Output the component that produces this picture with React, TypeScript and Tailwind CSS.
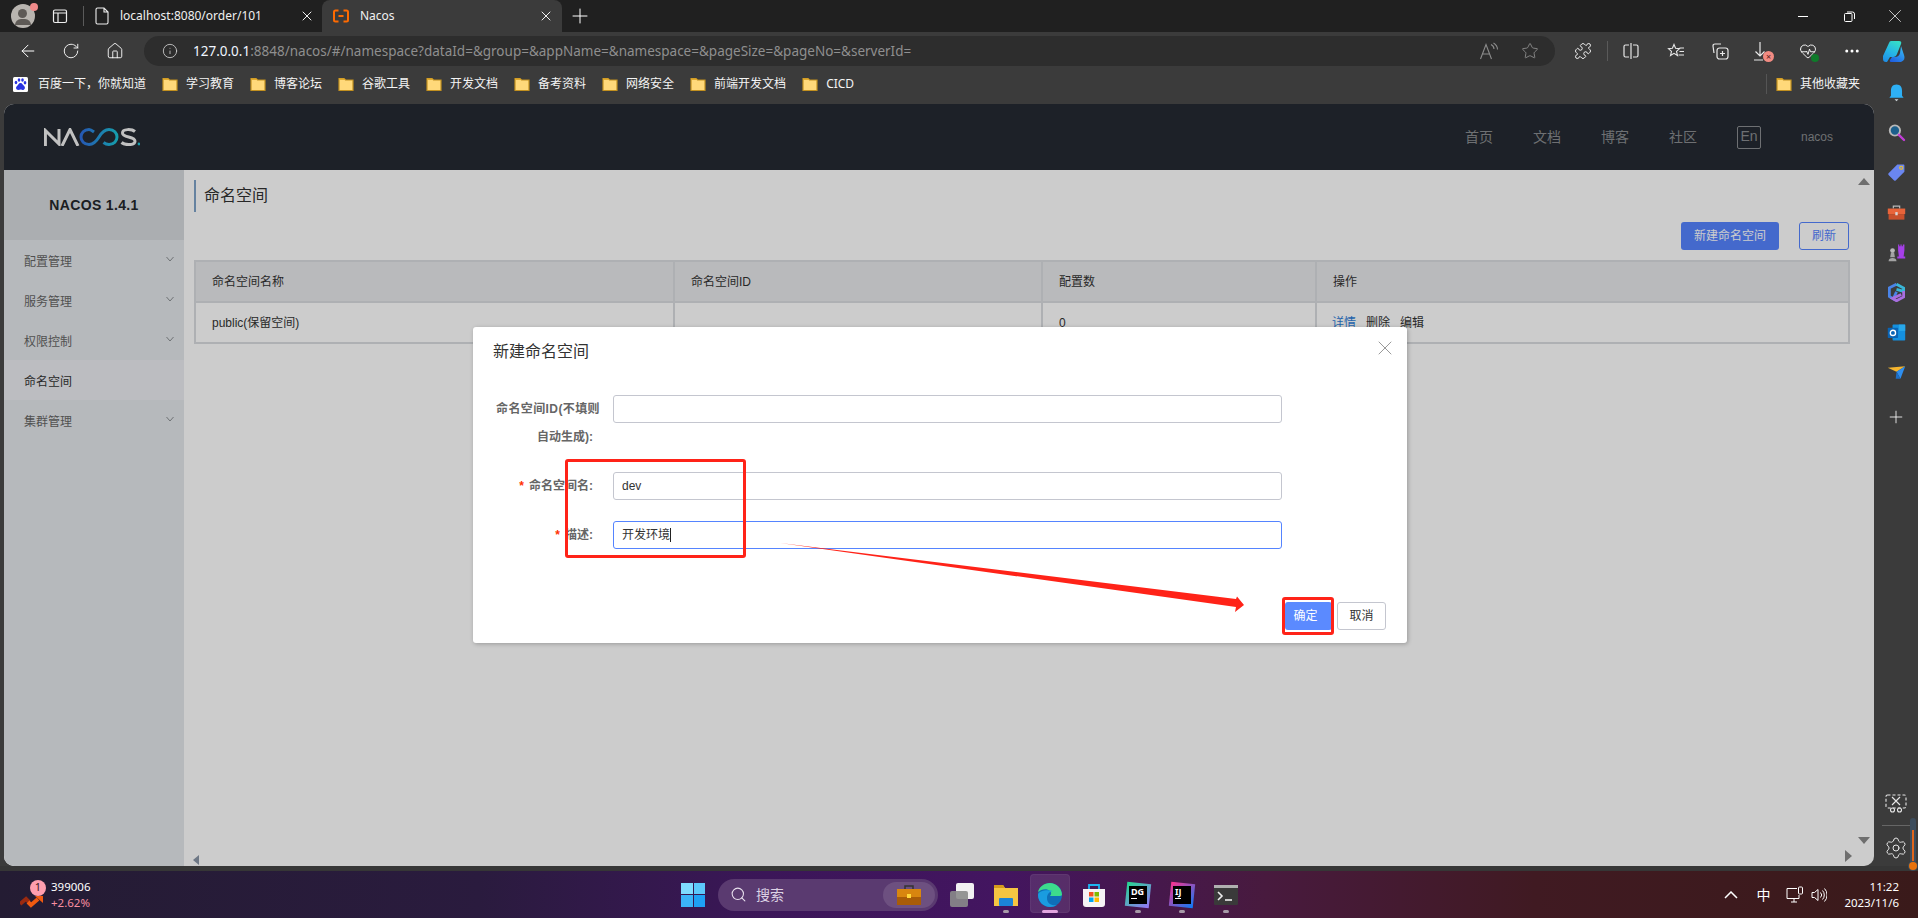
import React from "react";
import {
  ArrowLeft,
  Ellipsis,
  HeartPulse,
  House,
  Info,
  Plus,
  Puzzle,
  RotateCw,
  Search,
  Settings,
  Star,
  X,
} from "lucide-react";

const Folder = () => (
  <svg width="16" height="16" viewBox="0 0 16 16" className="shrink-0">
    <path d="M1 2.5h5l1.5 1.5H15v10.5H1z" fill="#ffd97a" stroke="#c2901f" strokeWidth="1.2" />
    <path d="M1 2.5h5l1.5 1.5H1z" fill="#e0a92e" />
  </svg>
);

const bookmarks = ["学习教育", "博客论坛", "谷歌工具", "开发文档", "备考资料", "网络安全", "前端开发文档", "CICD"];

const BaiduIcon = () => (
  <svg width="15" height="15" viewBox="0 0 15 15" className="shrink-0">
    <rect width="15" height="15" rx="1.5" fill="#fff" />
    <g fill="#2932e1">
      <ellipse cx="3" cy="5.5" rx="1.3" ry="1.7" />
      <ellipse cx="6" cy="3" rx="1.3" ry="1.7" />
      <ellipse cx="9.5" cy="3" rx="1.3" ry="1.7" />
      <ellipse cx="12" cy="5.8" rx="1.3" ry="1.7" />
      <path d="M7.5 6c2 0 2.2 2 3.6 3 1.5 1.2.9 4-1.5 4-1 0-1.3-.4-2.1-.4s-1.300.4-2.200.4c-2.400 0-2.900-2.900-1.200-4C5.300 8 5.500 6 7.500 6z" />
    </g>
  </svg>
);

const NacosTabIcon = () => (
  <svg width="16" height="14" viewBox="0 0 16 14" fill="none" stroke="#ff6a00" strokeWidth="2">
    <path d="M5.500 1.500H2.500Q1 1.500 1 3v8q0 1.500 1.500 1.500h3M10.500 1.500h3Q15 1.500 15 3v8q0 1.500-1.500 1.500h-3M5.500 7h5" />
  </svg>
);

const ReadAloud = () => (
  <svg width="20" height="18" viewBox="0 0 20 18" fill="none" stroke="#8c8c8c" strokeWidth="1.100">
    <path d="M1.500 17 7 2.500 12.500 17M3.300 12h7.400M12 2.500c2 1 3 2.500 3 4.500M14.500 1c2.500 1.500 4 3.500 4 6.500" />
  </svg>
);

const SplitIcon = () => (
  <svg width="16" height="18" viewBox="0 0 16 18" fill="none" stroke="#e8e8e8" strokeWidth="1.200">
    <path d="M6 3H2.500Q1 3 1 4.500v9Q1 15 2.500 15H6M10 3h3.500Q15 3 15 4.500v9q0 1.500-1.500 1.500H10M8 1v16" />
  </svg>
);

const FavIcon = () => (
  <svg width="18" height="18" viewBox="0 0 18 18" fill="none" stroke="#e8e8e8" strokeWidth="1.100">
    <path d="M7 2.500l1.600 3.800 3.900.4-3 2.700 1 4.100L7 11.300 3.500 13.500l1-4.100-3-2.700 3.900-.4zM12.500 6H17M12.500 9.500H17M11.500 13H17" />
  </svg>
);

const CollectionsIcon = () => (
  <svg width="18" height="18" viewBox="0 0 18 18" fill="none" stroke="#e8e8e8" strokeWidth="1.200">
    <path d="M10 2H4Q2 2 2 4l1 7" />
    <rect x="6" y="6" width="11" height="11" rx="2.500" />
    <path d="M11.500 9v5M9 11.500h5" />
  </svg>
);

const DownloadIcon = () => (
  <div className="relative h-[20px] w-[18px]">
    <svg width="18" height="20" viewBox="0 0 18 20" fill="none" stroke="#e8e8e8" strokeWidth="1.200">
      <path d="M6 1v14M1.500 10.500 6 15l4.500-4.500M0 19h9" />
    </svg>
    <span className="absolute bottom-[-1px] right-[-2px] flex h-[11px] w-[11px] items-center justify-center rounded-full bg-[#f28b82] text-[9px] leading-none text-[#5a2020]">×</span>
  </div>
);

const CopilotIcon = () => (
  <svg width="24" height="23" viewBox="0 0 24 23">
    <defs>
      <linearGradient id="cpA" x1="0.7" y1="0" x2="0.2" y2="1">
        <stop offset="0" stopColor="#35dcc8" />
        <stop offset="0.55" stopColor="#25b4e8" />
        <stop offset="1" stopColor="#1f8fe6" />
      </linearGradient>
      <linearGradient id="cpB" x1="0.8" y1="0" x2="0.2" y2="1">
        <stop offset="0" stopColor="#38c0f5" />
        <stop offset="1" stopColor="#1f5fe0" />
      </linearGradient>
    </defs>
    <path d="M19 6l3 9q2 5-3 7H10q-3 0-2-2l2-3h3q4 0 5-4z" fill="url(#cpB)" />
    <path d="M9 1h8q3 0 2 3L15 14q-1 3-4 3H8l-3 5H4q-3 0-3-3V16L7 3q.6-2 2-2z" fill="url(#cpA)" />
  </svg>
);

const RailBell = () => (
  <svg width="19" height="19" viewBox="0 0 24 24">
    <path d="M12 2c5 0 7 3.500 7 8v6l2 2.500H3L5 16v-6c0-4.500 2-8 7-8z" fill="#2eb0f5" />
    <path d="M9.500 20.500h5L12 23z" fill="#cfd6da" />
  </svg>
);

const RailSearch = () => (
  <svg width="19" height="19" viewBox="0 0 24 24" fill="none">
    <circle cx="10" cy="9.500" r="6.500" fill="#1c5f8c" stroke="#b8b8b8" strokeWidth="2.400" />
    <path d="M15 15l6.500 6.500" stroke="#c23ed8" strokeWidth="3" strokeLinecap="round" />
  </svg>
);

const RailTag = () => (
  <svg width="19" height="19" viewBox="0 0 24 24">
    <path d="M13 2h8q1 0 1 1v8L11 22q-1 1-2 0L2 15q-1-1 0-2z" fill="#6a86f0" />
    <circle cx="18" cy="6" r="2" fill="none" stroke="#f5c518" strokeWidth="1.300" />
  </svg>
);

const RailToolbox = () => (
  <svg width="19" height="19" viewBox="0 0 24 24">
    <path d="M8 7V4h8v3" fill="none" stroke="#b8b8b8" strokeWidth="1.500" />
    <rect x="1" y="7" width="22" height="7" fill="#e8643a" />
    <rect x="2" y="14" width="20" height="7" fill="#c9502c" />
    <rect x="10.500" y="11.500" width="3" height="4" fill="#d8d8d8" />
  </svg>
);

const RailChess = () => (
  <svg width="19" height="19" viewBox="0 0 24 24">
    <path d="M14 2h1.500v2H17V2h1.500v2H20V2h2v7l-1 8h2v2.500H13V17h2l-1-8z" fill="#a53fe8" />
    <circle cx="7" cy="9.500" r="3" fill="#b8b8b8" />
    <path d="M5 12h4l1 6H4zM2 23c0-3 2-4 5-4s5 1 5 4z" fill="#a3a3a3" />
  </svg>
);

const RailM365 = () => (
  <svg width="19" height="19" viewBox="0 0 24 24" fill="none">
    <path d="M12 1.500 3 6v11l5 3 4-9" stroke="#4a84e8" strokeWidth="3.500" />
    <path d="M12 1.500l9 5v4l-9-2.500" stroke="#39b6d8" strokeWidth="3.500" />
    <path d="M21 10v7.500l-9 5-5-3 11-5" stroke="#a86ee0" strokeWidth="3.500" />
  </svg>
);

const RailOutlook = () => (
  <svg width="19" height="19" viewBox="0 0 24 24">
    <rect x="7" y="2" width="16" height="20" rx="1" fill="#1490df" />
    <rect x="15" y="2" width="8" height="8" fill="#28a8ea" />
    <rect x="1" y="6" width="13" height="13" rx="1" fill="#0a64b4" />
    <circle cx="7.500" cy="12.500" r="3.300" fill="none" stroke="#fff" strokeWidth="1.700" />
  </svg>
);

const RailSend = () => (
  <svg width="19" height="19" viewBox="0 0 24 24">
    <path d="M1 6l22-2-11 7z" fill="#f5b52e" />
    <path d="M23 4l-6 16-5-9z" fill="#2e8ff0" />
    <path d="M12 11l-1 9 6 0z" fill="#1c6fc8" />
  </svg>
);

const railIcons = [RailBell, RailSearch, RailTag, RailToolbox, RailChess, RailM365, RailOutlook, RailSend];

const NacosLogo = () => (
  <svg width="96" height="18" viewBox="0 0 96 18" fill="none" strokeWidth="3">
    <defs>
      <linearGradient id="logoLoop" x1="0" y1="0" x2="1" y2="0">
        <stop offset="0" stopColor="#2f6fe0" />
        <stop offset="1" stopColor="#1cc4d8" />
      </linearGradient>
    </defs>
    <path d="M1.400 18V2.500L15 16V1" stroke="#f2f2f2" />
    <path d="M18 18 26 1.500 34 18" stroke="#f2f2f2" />
    <path
      d="M50 4C48 2.500 46.500 1.500 45 1.500 40 1.500 37 5 37 9s3 7.500 8 7.500c4 0 7-2.500 10-7.500 3-5 6-7.500 10-7.500 5 0 8 3.500 8 7.500s-3 7.500-8 7.500c-2 0-4-.800-5.500-2"
      stroke="url(#logoLoop)"
    />
    <path d="M91 3.500C88 1 78.500.5 78.500 5c0 5 12.500 3 12.500 8.200 0 4.300-10 4.300-13.500 1.300" stroke="#f2f2f2" />
    <circle cx="95" cy="16" r="1.400" fill="#1cc4d8" />
  </svg>
);

const Triangle = ({ className }: { className: string }) => <div className={`absolute h-0 w-0 ${className}`} />;

const menu = [
  { name: "配置管理", arrow: true },
  { name: "服务管理", arrow: true },
  { name: "权限控制", arrow: true },
  { name: "命名空间", arrow: false, active: true },
  { name: "集群管理", arrow: true },
];

const Chevron = () => (
  <svg width="8" height="6" viewBox="0 0 8 6" fill="none" stroke="#8b8f93" strokeWidth="1">
    <path d="M.5 1 4 5l3.500-4" />
  </svg>
);

const Sidebar = () => (
  <div className="flex w-[180px] shrink-0 flex-col bg-[#e4e8eb]">
    <div className="flex h-[70px] items-center justify-center bg-[#d6dade] text-[14px] font-bold tracking-[0.35px] text-[#23262a]">NACOS 1.4.1</div>
    {menu.map((item) => (
      <div
        key={item.name}
        className={`flex h-10 items-center justify-between pl-5 pr-[10px] pt-1 text-[12px] ${item.active ? "bg-[#ebedf2] text-[#333]" : "text-[#666]"}`}
      >
        <span>{item.name}</span>
        {item.arrow && <span className="mb-[6px]"><Chevron /></span>}
      </div>
    ))}
  </div>
);

const NamespaceTable = () => (
  <table className="w-[1654px] table-fixed border-collapse text-[12px] text-[#333]">
    <colgroup>
      <col className="w-[479px]" />
      <col className="w-[368px]" />
      <col className="w-[274px]" />
      <col className="w-[533px]" />
    </colgroup>
    <thead>
      <tr className="h-[41px] bg-[#e8e9eb]">
        {["命名空间名称", "命名空间ID", "配置数", "操作"].map((h) => (
          <th key={h} className="border-2 border-[#dadce0] px-4 text-left font-normal">{h}</th>
        ))}
      </tr>
    </thead>
    <tbody>
      <tr className="h-[41px]">
        <td className="border-2 border-[#dadce0] px-4">public(保留空间)</td>
        <td className="border-2 border-[#dadce0] px-4"></td>
        <td className="border-2 border-[#dadce0] px-4">0</td>
        <td className="border-2 border-[#dadce0] pl-[15px] pr-4">
          <span className="text-[#2d7cd6]">详情</span>
          <span className="ml-[10px]">删除</span>
          <span className="ml-[10px]">编辑</span>
        </td>
      </tr>
    </tbody>
  </table>
);

const Field = ({ label, required, value, focused, caret }: { label: string; required?: boolean; value?: string; focused?: boolean; caret?: boolean }) => (
  <div className="mb-[21px] flex">
    <div className="flex h-7 w-[140px] items-center justify-end pr-5 text-[12px] font-bold text-[#666]">
      {required && <span className="mr-[5px] text-[#ff3000]">*</span>}
      {label}
    </div>
    <div className={`flex h-7 w-[669px] items-center rounded-[3px] border px-2 text-[12px] text-[#333] ${focused ? "border-[#5584ff]" : "border-[#c4c6cf]"}`}>
      {value}
      {caret && <span className="h-[14px] w-px bg-[#222]" />}
    </div>
  </div>
);

const Dialog = () => (
  <div className="absolute left-[469px] top-[223px] z-20 flex h-[316px] w-[934px] flex-col rounded-[3px] bg-white shadow-[1px_1px_4px_rgba(0,0,0,0.25)]">
    <div className="h-[68px] pl-5 pt-[13px] text-[16px] leading-6 text-[#333]">新建命名空间</div>
    <X className="absolute left-[900px] top-[9px] h-6 w-6 text-[#999]" strokeWidth={1} />
    <div className="flex flex-col">
      <div className="mb-[21px] flex h-[56px]">
        <div className="w-[140px] pr-5 text-right text-[12px] font-bold leading-7 text-[#666]">
          <div className="mr-[-7px] tracking-[0.4px]">命名空间ID(不填则</div>
          <div>自动生成):</div>
        </div>
        <div className="h-7 w-[669px] rounded-[3px] border border-[#c4c6cf]" />
      </div>
      <Field label="命名空间名:" required value="dev" />
      <Field label="描述:" required value="开发环境" focused caret />
    </div>
    <div className="mr-[21px] mt-auto mb-[13px] flex justify-end gap-[5px] text-[12px]">
      <div className="flex h-7 w-[47px] items-center justify-center rounded-[3px] bg-[#5b8aff] pr-[6px] text-white">确定</div>
      <div className="flex h-7 w-[49px] items-center justify-center rounded-[3px] border border-[#c4c6cf] text-[#333]">取消</div>
    </div>

    {/* 标注 */}
    <div className="absolute left-[92px] top-[132px] h-[99px] w-[181px] rounded-[3px] border-[3px] border-[#ff2318]" />
    <div className="absolute left-[809px] top-[270px] h-[38px] w-[52px] rounded-[3px] border-[3px] border-[#ff2318]" />
    <svg className="absolute left-0 top-0" width="934" height="316" viewBox="0 0 934 316">
      <path d="M307 216 763 272 764 269.500 771 278 762 285 763 280z" fill="#ff2318" />
    </svg>
  </div>
);

const TaskDot = ({ active }: { active?: boolean }) => (
  <span className={`absolute bottom-[5px] h-[3px] rounded-full ${active ? "w-4 bg-[#e3a5e0]" : "w-[6px] bg-[#a79aa8]"}`} />
);

const StartIcon = () => (
  <div className="grid h-6 w-6 shrink-0 grid-cols-2 gap-[1px]">
    <span className="bg-[#7fdcff]" />
    <span className="bg-[#5cc8fb]" />
    <span className="bg-[#3bb4f8]" />
    <span className="bg-[#1ea0f5]" />
  </div>
);

const ToolboxIcon = () => (
  <svg width="26" height="24" viewBox="0 0 26 24">
    <path d="M9 6V3h8v3" fill="none" stroke="#333" strokeWidth="1.500" />
    <rect x="1" y="6" width="24" height="8" fill="#d8860f" />
    <rect x="1" y="14" width="24" height="8" fill="#a85c08" />
    <rect x="11" y="11" width="4" height="4" fill="#ffd83a" />
  </svg>
);

const WidgetsIcon = () => (
  <div className="relative h-6 w-6">
    <span className="absolute right-0 top-0 h-4 w-[18px] rounded-[2px] bg-[#f2f0f2]" />
    <span className="absolute bottom-0 left-0 h-4 w-[18px] rounded-[2px] bg-[#8b8b8b]/90" />
  </div>
);

const FolderTask = () => (
  <svg width="24" height="24" viewBox="0 0 24 24">
    <path d="M0 2h9l2 3h13v18H0z" fill="#f5c542" />
    <path d="M0 2h9l2 3H0z" fill="#d59a1c" />
    <rect x="5" y="15" width="14" height="8" rx="1" fill="#1b84d8" />
  </svg>
);

const EdgeIcon = () => (
  <svg width="24" height="24" viewBox="0 0 24 24">
    <circle cx="12" cy="12" r="12" fill="#0f6fb8" />
    <path d="M24 12C24 5 18 0 12 0 6 0 1 4 0 9c3-3 9-4 12-1 2 2 1 4 0 5h6c3 0 6 0 6-1z" fill="#3ddb8c" />
    <path d="M0 12c0 7 6 12 12 12 3 0 5-1 7-2-5 1-10-1-10-7 0-4 3-7 6-7-6-2-15 0-15 4z" fill="#1a9ce0" />
  </svg>
);

const StoreIcon = () => (
  <svg width="24" height="24" viewBox="0 0 24 24">
    <path d="M7 6V2h10v4" fill="none" stroke="#1eb4f0" strokeWidth="1.800" />
    <path d="M1 6h22v15q0 3-3 3H4q-3 0-3-3z" fill="#f5f2f5" />
    <rect x="7" y="9" width="4.500" height="4.500" fill="#f25022" />
    <rect x="12.500" y="9" width="4.500" height="4.500" fill="#7fba00" />
    <rect x="7" y="14.500" width="4.500" height="4.500" fill="#00a4ef" />
    <rect x="12.500" y="14.500" width="4.500" height="4.500" fill="#ffb900" />
  </svg>
);

const JetBrainsIcon = ({ label, a, b }: { label: string; a: string; b: string }) => (
  <div className="relative flex h-6 w-6 items-start justify-center">
    <span className="absolute left-0 top-0 h-6 w-6 rotate-6" style={{ background: `linear-gradient(135deg, ${a}, ${b})` }} />
    <span className="absolute left-[3px] top-[3px] flex h-[18px] w-[18px] flex-col bg-black px-[2px] text-[9px] font-bold leading-[11px] text-white">
      {label}
      <span className="mt-[1px] h-[1.500px] w-[6px] bg-white" />
    </span>
  </div>
);

const TerminalIcon = () => (
  <svg width="24" height="24" viewBox="0 0 24 24">
    <rect x="0" y="2" width="24" height="20" rx="1" fill="#3a3a3a" />
    <rect x="0" y="2" width="24" height="3" fill="#b0b0b0" />
    <path d="M4 9l4 4-4 4" fill="none" stroke="#eee" strokeWidth="1.600" />
    <path d="M11 17h7" stroke="#eee" strokeWidth="1.600" />
  </svg>
);

const taskIcons: { el: React.ReactNode; dot?: boolean; active?: boolean }[] = [
  { el: <WidgetsIcon /> },
  { el: <FolderTask />, dot: true },
  { el: <EdgeIcon />, dot: true, active: true },
  { el: <StoreIcon /> },
  { el: <JetBrainsIcon label="DG" a="#22d88f" b="#9775f8" />, dot: true },
  { el: <JetBrainsIcon label="IJ" a="#ff318c" b="#087cfa" />, dot: true },
  { el: <TerminalIcon />, dot: true },
];

const Taskbar = () => (
  <div className="flex h-[47px] shrink-0 items-center bg-[linear-gradient(90deg,#241c33_0%,#2a1b3e_25%,#3b1658_40%,#431560_52%,#481a3e_66%,#401a22_80%,#3a1a1a_100%)] text-white">
    <div className="flex w-[681px] shrink-0 items-center pl-5">
      <div className="relative h-6 w-6">
        <svg width="24" height="24" viewBox="0 0 24 24" className="mt-[4px]">
          <path d="M0 17l6-5 3 3" fill="none" stroke="#9a2a10" strokeWidth="4" />
          <path d="M8 15l3 3 7-6" fill="none" stroke="#f05a10" strokeWidth="4" />
          <path d="M15 9h8v7z" fill="#f05a10" />
        </svg>
        <span className="absolute left-[10px] top-[-3px] flex h-4 w-4 items-center justify-center rounded-full bg-[#ff9eae] text-[11px] text-[#3a1a22]">1</span>
      </div>
      <div className="ml-[7px] flex flex-col text-[11.500px] leading-4">
        <span>399006</span>
        <span className="text-[#f98ea0]">+2.62%</span>
      </div>
    </div>
    <StartIcon />
    <div className="ml-[13px] flex h-8 w-[220px] shrink-0 items-center rounded-full bg-[#5a3a70] pl-[12px]">
      <Search className="h-[17px] w-[17px] text-[#e8e0ee]" strokeWidth={1.500} />
      <span className="ml-[9px] text-[14px] text-[#dcd2e4]">搜索</span>
      <div className="ml-auto mr-[3px] flex h-[26px] w-[52px] items-center justify-center rounded-full bg-[#6d5080]">
        <ToolboxIcon />
      </div>
    </div>
    <div className="ml-[2px] flex">
      {taskIcons.map((t, i) => (
        <div key={i} className="relative flex h-[47px] w-11 items-center justify-center">
          {t.active && <span className="absolute left-[2px] top-[3px] h-[39px] w-10 rounded-[4px] border border-white/5 bg-white/10" />}
          <span className="relative">{t.el}</span>
          {t.dot && <TaskDot active={t.active} />}
        </div>
      ))}
    </div>
    <div className="ml-auto flex items-center">
      <svg width="14" height="8" viewBox="0 0 14 8" fill="none" stroke="#fff" strokeWidth="1.500">
        <path d="M1 7l6-6 6 6" />
      </svg>
      <span className="ml-[18px] text-[14px]">中</span>
      <svg className="ml-[16px]" width="18" height="18" viewBox="0 0 18 18" fill="none" stroke="#fff" strokeWidth="1">
        <path d="M11 2.500H1v10h12V9M5 16h6M8 12.500V16" />
        <rect x="12.500" y="1" width="4" height="7" rx="1" />
      </svg>
      <svg className="ml-[7px]" width="16" height="16" viewBox="0 0 16 16" fill="none" stroke="#fff" strokeWidth="1">
        <path d="M1 5.500h2.500L7 2.500v11l-3.500-3H1zM9.500 5.500a3.500 3.500 0 0 1 0 5M11.500 3.500a6.500 6.500 0 0 1 0 9M13.500 1.500a9.500 9.500 0 0 1 0 13" />
      </svg>
      <div className="ml-[17px] mr-[19px] flex flex-col items-end text-[11.500px] leading-4">
        <span>11:22</span>
        <span>2023/11/6</span>
      </div>
    </div>
  </div>
);

export default function App() {
  return (
    <div className="relative flex h-[918px] w-[1918px] flex-col overflow-hidden bg-[#3b3b3b] font-['Noto_Sans','Noto_Sans_CJK_SC',sans-serif] text-white">
      {/* 标签栏 */}
      <div className="flex h-8 shrink-0 items-center bg-[#202020] text-[12px]">
        <div className="relative ml-[11px] h-6 w-6 rounded-full bg-[#b9b5b0]">
          <span className="absolute left-[7px] top-[5px] h-[9px] w-[9px] rounded-full bg-[#5e5a56]" />
          <span className="absolute bottom-[3px] left-[4px] h-[6px] w-4 rounded-t-full bg-[#5e5a56]" />
          <span className="absolute right-[-3px] top-[-1px] h-2 w-2 rounded-full bg-[#f08a8a]" />
        </div>
        <svg className="ml-[17px]" width="16" height="16" viewBox="0 0 16 16" fill="none" stroke="#eee" strokeWidth="1.200">
          <rect x="1.500" y="2" width="13" height="12.500" rx="1.500" />
          <path d="M1.500 5h13M6 5v9.500" />
        </svg>
        <span className="ml-[15px] h-5 w-px bg-[#5a5a5a]" />
        <div className="flex h-8 w-[238px] items-center pl-[11px]">
          <svg width="14" height="18" viewBox="0 0 14 18" fill="none" stroke="#eee" strokeWidth="1.100">
            <path d="M1 2.500Q1 1 2.500 1H9l4 4v10.500q0 1.500-1.500 1.500h-9Q1 17 1 15.500zM9 1v4h4" />
          </svg>
          <span className="ml-[11px] text-[#f0f0f0]">localhost:8080/order/101</span>
          <X className="ml-auto mr-[7px] h-4 w-4" strokeWidth={1.400} />
        </div>
        <div className="flex h-8 w-[240px] items-center rounded-t-lg bg-[#3b3b3b] pl-[11px]">
          <NacosTabIcon />
          <span className="ml-[11px] text-[#f0f0f0]">Nacos</span>
          <X className="ml-auto mr-[8px] h-4 w-4" strokeWidth={1.400} />
        </div>
        <Plus className="ml-[6px] h-6 w-6" strokeWidth={1} />
        <div className="ml-auto flex">
          <div className="flex h-8 w-[46px] items-center justify-center"><span className="h-px w-[10px] bg-white" /></div>
          <div className="flex h-8 w-[46px] items-center justify-center">
            <svg width="11" height="11" viewBox="0 0 11 11" fill="none" stroke="#fff" strokeWidth="1">
              <rect x=".5" y="2.500" width="7.500" height="8" rx="1" />
              <path d="M3 1h5.500q2 0 2 2v5" />
            </svg>
          </div>
          <div className="flex h-8 w-[46px] items-center justify-center"><X className="h-[22px] w-[22px]" strokeWidth={0.800} /></div>
        </div>
      </div>

      {/* 地址栏 */}
      <div className="flex h-[34px] shrink-0 items-center pt-1">
        <ArrowLeft className="ml-[18px] h-5 w-5" strokeWidth={1.200} />
        <RotateCw className="ml-[24px] h-[18px] w-[18px]" strokeWidth={1.200} />
        <House className="ml-[26px] h-[18px] w-[18px]" strokeWidth={1.200} />
        <div className="ml-[20px] flex h-[30px] w-[1411px] shrink-0 items-center rounded-full bg-[#2d2d2d]">
          <Info className="ml-[18px] h-4 w-4 text-[#d8d8d8]" strokeWidth={1.200} />
          <span className="ml-[15px] text-[13.500px] text-[#8f8f8f]">
            <span className="text-[#f0f6ff]">127.0.0.1</span>:8848/nacos/#/namespace?dataId=&amp;group=&amp;appName=&amp;namespace=&amp;pageSize=&amp;pageNo=&amp;serverId=
          </span>
          <span className="ml-auto"><ReadAloud /></span>
          <Star className="ml-[22px] mr-[16px] h-[18px] w-[18px] text-[#8c8c8c]" strokeWidth={1.200} />
        </div>
        <Puzzle className="ml-[19px] h-[18px] w-[18px]" strokeWidth={1.200} />
        <span className="ml-[15px] h-5 w-px bg-[#5a5a5a]" />
        <span className="ml-[15px]"><SplitIcon /></span>
        <span className="ml-[28px]"><FavIcon /></span>
        <span className="ml-[26px]"><CollectionsIcon /></span>
        <span className="ml-[25px]"><DownloadIcon /></span>
        <span className="relative ml-[27px]">
          <HeartPulse className="h-[18px] w-[18px]" strokeWidth={1.200} />
          <span className="absolute bottom-[-2px] right-[-2px] h-2 w-2 rounded-full bg-[#0f7a2a]" />
        </span>
        <Ellipsis className="ml-[26px] h-[18px] w-[18px]" strokeWidth={2} />
        <span className="ml-[21px]"><CopilotIcon /></span>
      </div>

      <div className="flex h-[800px] shrink-0">
        <div className="flex w-[1874px] shrink-0 flex-col">
          {/* 收藏夹栏 */}
          <div className="flex h-[38px] shrink-0 items-center pb-[2px] text-[12px] text-[#f4f4f4]">
            <span className="ml-[13px]"><BaiduIcon /></span>
            <span className="ml-[10px]">百度一下，你就知道</span>
            {bookmarks.map((b) => (
              <div key={b} className="ml-4 flex items-center gap-2">
                <Folder />
                <span>{b}</span>
              </div>
            ))}
            <span className="ml-auto h-5 w-px bg-[#555]" />
            <div className="ml-[9px] mr-[14px] flex items-center gap-2">
              <Folder />
              <span>其他收藏夹</span>
            </div>
          </div>

          {/* 页面 */}
          <div className="relative ml-1 flex h-[762px] flex-col overflow-hidden rounded-[10px] bg-white font-['Liberation_Sans','Noto_Sans_CJK_SC',sans-serif]">
            <div className="flex h-[66px] shrink-0 items-center bg-[#252a32] pl-10 pr-[41px] text-[14px] text-[#8a8d90]">
              <NacosLogo />
              <div className="ml-auto flex items-center gap-10">
                <span>首页</span>
                <span>文档</span>
                <span>博客</span>
                <span>社区</span>
                <span className="flex h-[23px] w-6 items-center justify-center rounded-[2px] border border-[#8a8d90] pb-[2px]">En</span>
                <span className="text-[12px]">nacos</span>
              </div>
            </div>
            <div className="flex flex-1">
              <Sidebar />
              <div className="relative flex-1 pl-[10px] pt-[10px]">
                <div className="h-8 border-l-2 border-[#7fa3c9] pl-2 text-[16px] leading-8 text-[#333]">命名空间</div>
                <div className="mt-[10px] flex justify-end gap-5 pr-[25px] text-[12px]">
                  <div className="flex h-7 w-[98px] items-center justify-center rounded-[3px] bg-[#5584ff] text-white">新建命名空间</div>
                  <div className="flex h-7 w-[50px] items-center justify-center rounded-[3px] border border-[#5584ff] bg-white text-[#5584ff]">刷新</div>
                </div>
                <div className="mt-[10px]">
                  <NamespaceTable />
                </div>
              </div>
            </div>
            {/* 滚动条箭头 */}
            <Triangle className="right-[4px] top-[74px] border-x-[6px] border-b-[7px] border-x-transparent border-b-[#8a8a8a]" />
            <Triangle className="bottom-[22px] right-[4px] border-x-[6px] border-t-[7px] border-x-transparent border-t-[#8a8a8a]" />
            <Triangle className="bottom-[4px] right-[22px] border-y-[6px] border-l-[7px] border-y-transparent border-l-[#8a8a8a]" />
            <Triangle className="bottom-[1px] left-[189px] border-y-[5px] border-r-[6px] border-y-transparent border-r-[#8a96a8]" />
            <div className="absolute inset-0 z-10 bg-black/20" />
            <Dialog />
          </div>
        </div>

        {/* 右侧边栏 */}
        <div className="flex w-11 flex-col items-center pt-[6px]">
          {railIcons.map((Icon, i) => (
            <div key={i} className="flex h-10 items-center justify-center"><Icon /></div>
          ))}
          <Plus className="mt-[15px] h-5 w-5" strokeWidth={1} />
          <svg className="mt-auto" width="24" height="24" viewBox="0 0 24 24" fill="none" stroke="#e8e8e8" strokeWidth="1.100">
            <rect x="2" y="4" width="20" height="13" rx="1.500" strokeDasharray="3 2" />
            <path d="M8 12l8-8M16 12 8 4" transform="translate(0 2)" />
            <circle cx="8.500" cy="19" r="2" />
            <circle cx="15.500" cy="19" r="2" />
          </svg>
          <span className="mt-[10px] h-px w-7 bg-[#666]" />
          <Settings className="mb-[6px] mt-[10px] h-6 w-6 text-[#e8e8e8]" strokeWidth={1} />
        </div>
      </div>

      <div className="h-[5px] shrink-0 bg-[#363636]" />
      <Taskbar />

      {/* 温度条 */}
      <div className="absolute left-[1910px] top-[818px] z-30 flex h-[52px] w-[6px] justify-center rounded-full bg-[#3c4c5c]">
        <span className="mt-[12px] h-9 w-[2px] bg-[#e0651c]" />
      </div>
      <span className="absolute left-[1909px] top-[862px] z-30 h-2 w-2 rounded-full bg-[#e8720c] ring-1 ring-[#3c4c5c]" />
    </div>
  );
}
